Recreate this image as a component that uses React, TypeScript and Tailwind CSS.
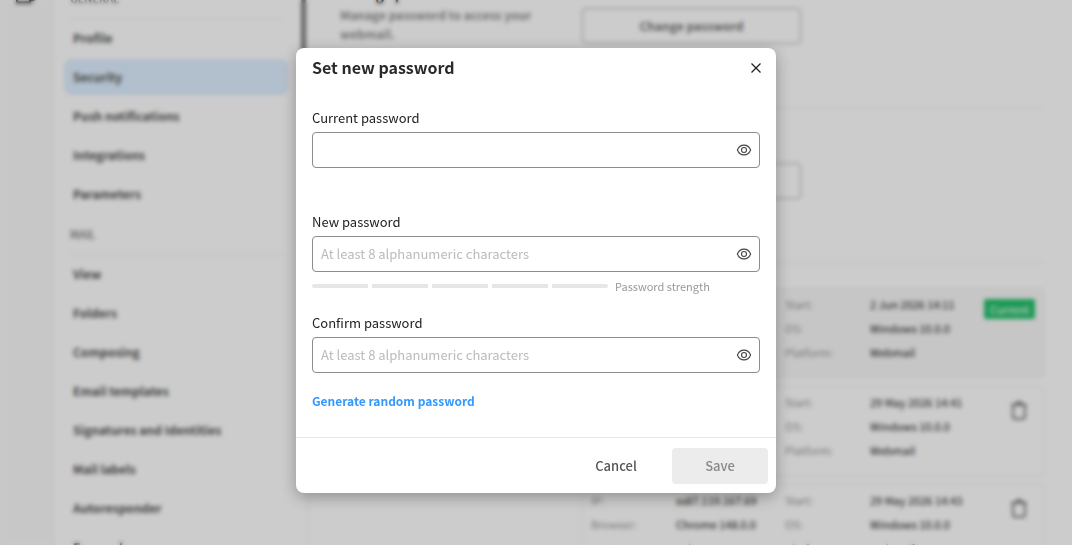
import { useState } from "react";

type Session = {
  ip: string;
  browser: string;
  device: string;
  start: string;
  os: string;
  platform: string;
  current?: boolean;
};

const general = ["Profile", "Security", "Push notifications", "Integrations", "Parameters"];
const mail = [
  "View",
  "Folders",
  "Composing",
  "Email templates",
  "Signatures and Identities",
  "Mail labels",
  "Autoresponder",
  "Forward messages",
];

const base = {
  ip: "ss87.119.167.69",
  browser: "Chrome 148.0.0",
  device: "Other 0.0.0",
  os: "Windows 10.0.0",
  platform: "Webmail",
};
const sessions: Session[] = [
  { ...base, start: "2 Jun 2026 14:11", current: true },
  { ...base, start: "29 May 2026 14:41" },
  { ...base, start: "29 May 2026 14:43" },
];

function NavGroup({ title, items, active }: { title: string; items: string[]; active?: string }) {
  return (
    <section className="mb-3">
      <h2 className="mr-6 ml-[17px] border-b border-[#f0f0f0] pb-2.5 text-[11px] leading-5 font-medium text-[#777]">
        {title}
      </h2>
      <ul className="mt-px flex flex-col gap-[3px] pr-[19px] pl-[11px]">
        {items.map((item) => (
          <li key={item}>
            <a
              href="#"
              className={
                item === active
                  ? "block rounded-lg bg-[#dfefff] px-[9px] text-[12px] leading-9 font-bold text-[#555]"
                  : "block rounded-lg px-[9px] text-[12px] leading-9 font-bold text-[#555]"
              }
            >
              {item}
            </a>
          </li>
        ))}
      </ul>
    </section>
  );
}

function Trash() {
  return (
    <svg width="18" height="20" viewBox="0 0 18 20" fill="none" stroke="#4a4a4a" strokeWidth="1.4" strokeLinejoin="round">
      <path d="M1.5 4.8h15M6 4.8L7 2.2h4l1 2.6M3 4.8V17a1.8 1.8 0 0 0 1.8 1.8h8.4A1.8 1.8 0 0 0 15 17V4.8" />
    </svg>
  );
}

function SessionCard({ s }: { s: Session }) {
  const rows = [
    ["IP:", s.ip, "Start:", s.start],
    ["Browser:", s.browser, "OS:", s.os],
    ["Device:", s.device, "Platform:", s.platform],
  ];
  return (
    <li
      className={
        s.current
          ? "flex h-[90px] justify-between rounded border border-[#f0f0f0] bg-[#f8f8f8] pt-[3px] pr-2 pl-2"
          : "flex h-[90px] justify-between rounded border border-[#f0f0f0] pt-[3px] pr-2 pl-2"
      }
    >
      <dl className="grid grid-cols-[85px_109px_85px_auto] content-start text-[11px] leading-6 whitespace-nowrap">
        {rows.flat().map((text, i) =>
          i % 2 === 0 ? (
            <dt key={i} className="text-[#999]">{text}</dt>
          ) : (
            <dd key={i} className="text-[#222]">{text}</dd>
          ),
        )}
      </dl>
      {s.current ? (
        <span className="mt-[7px] h-5 rounded-xs bg-[#26c26c] px-1.5 text-[11px] leading-5 text-white">Current</span>
      ) : (
        <button type="button" aria-label="End session" className="mt-2.5 mr-[7px] h-5">
          <Trash />
        </button>
      )}
    </li>
  );
}

function Eye() {
  return (
    <svg width="16" height="16" viewBox="0 0 16 16" fill="none" stroke="#444" strokeWidth="1.1">
      <path d="M1.4 8C2.6 5 5 3.1 8 3.1S13.4 5 14.6 8c-1.2 3-3.6 4.9-6.6 4.9S2.6 11 1.4 8Z" />
      <circle cx="8" cy="8" r="2.5" />
    </svg>
  );
}

function PasswordField({ id, label, placeholder }: { id: string; label: string; placeholder?: string }) {
  const [shown, setShown] = useState(false);
  return (
    <div className="flex flex-col gap-1">
      <label htmlFor={id} className="text-[13px] leading-5 text-[#222]">
        {label}
      </label>
      <div className="flex h-9 items-center rounded border border-[#8c8c8c] pr-[7px] pl-2">
        <input
          id={id}
          type={shown ? "text" : "password"}
          placeholder={placeholder}
          className="min-w-0 flex-1 bg-transparent text-[13px] leading-5 text-[#222] outline-none placeholder:text-[#bbb]"
        />
        <button type="button" aria-label="Show password" onClick={() => setShown(!shown)}>
          <Eye />
        </button>
      </div>
    </div>
  );
}

export default function App() {
  return (
    <div className="relative h-screen overflow-hidden bg-white font-['Noto_Sans_CJK_SC','Noto_Sans',sans-serif]">
      <div className="flex h-full">
        <nav className="flex w-[53px] shrink-0 flex-col items-center border-r border-[#efefef] bg-[#f9f9f9]">
          <svg className="-mt-4 -mr-0.5" width="24" height="20" viewBox="0 0 24 20" fill="none" stroke="#333" strokeWidth="2">
            <path d="M2 2v16.5h13V12M15 17l6-2V8" />
          </svg>
        </nav>
        <aside className="flex w-[255px] shrink-0 justify-between overflow-hidden border-r border-[#f0f0f0]">
          <div className="-mt-3 min-w-0 flex-1">
            <NavGroup title="GENERAL" items={general} active="Security" />
            <NavGroup title="MAIL" items={mail} />
          </div>
          <div className="mr-px -ml-1.5 h-[300px] w-[5px] shrink-0 bg-[#808080]" />
        </aside>
        <main className="min-w-0 flex-1 overflow-hidden pr-7 pl-8">
          <section className="-mt-4 grid h-[124px] grid-cols-[242px_1fr] border-b border-[#f0f0f0]">
            <div className="w-52">
              <h2 className="text-[14px] leading-5 font-bold text-[#222]">Change password</h2>
              <p className="pt-px text-[12px] leading-[19px] font-bold text-[#949494]">
                Manage password to access your webmail.
              </p>
            </div>
            <button type="button" className="mt-6 h-9 w-[219px] rounded border border-[#b0b0b0] text-[12px] font-bold text-[#777]">
              Change password
            </button>
          </section>
          <section className="grid h-[155px] grid-cols-[242px_1fr] border-b border-[#f0f0f0]">
            <span />
            <button type="button" aria-label="Recovery options" className="mt-[55px] h-9 w-[219px] rounded border border-[#b0b0b0]" />
          </section>
          <section className="grid grid-cols-[242px_1fr] pt-[25px]">
            <span />
            <ul className="flex flex-col gap-2">
              {sessions.map((s) => (
                <SessionCard key={s.start} s={s} />
              ))}
            </ul>
          </section>
        </main>
      </div>

      <div className="absolute inset-0 flex items-start justify-center bg-black/20 pt-12 backdrop-blur-[2px]">
        <form
          role="dialog"
          aria-labelledby="dialog-title"
          className="w-[480px] max-w-full rounded-lg bg-white shadow-[0_4px_16px_rgba(0,0,0,0.3)]"
          onSubmit={(e) => e.preventDefault()}
        >
          <header className="flex h-10 items-center justify-between px-4">
            <h1 id="dialog-title" className="pb-0.5 text-[16px] leading-6 font-bold text-[#2a2a2a]">
              Set new password
            </h1>
            <button type="button" aria-label="Close" className="-mr-1 flex size-4 items-center justify-center">
              <svg width="10" height="10" viewBox="0 0 10 10" stroke="#222" strokeWidth="1.3">
                <path d="M.5.5l9 9M9.5.5l-9 9" />
              </svg>
            </button>
          </header>
          <div className="px-4 pt-5 pb-[26px]">
            <PasswordField id="current" label="Current password" />
            <div className="mt-11">
              <PasswordField id="new" label="New password" placeholder="At least 8 alphanumeric characters" />
              <div className="mt-1 flex h-5 items-center gap-[7px]">
                <div className="flex gap-1 overflow-hidden rounded-full">
                  {[0, 1, 2, 3, 4].map((i) => (
                    <span key={i} className="h-1 w-14 bg-[#e6e6e6]" />
                  ))}
                </div>
                <span className="text-[11px] leading-[18px] text-[#999]">Password strength</span>
              </div>
            </div>
            <div className="mt-[17px]">
              <PasswordField id="confirm" label="Confirm password" placeholder="At least 8 alphanumeric characters" />
            </div>
            <button type="button" className="mt-[18px] block text-[12px] leading-5 font-bold text-[#3399ff]">
              Generate random password
            </button>
          </div>
          <footer className="flex h-14 items-start justify-end gap-2 border-t border-[#e6e6e6] pt-2.5 pr-2">
            <button type="button" className="h-9 w-24 rounded text-[13px] font-medium text-[#555]">
              Cancel
            </button>
            <button type="submit" disabled className="h-9 w-24 rounded bg-[#ececec] text-[13px] font-medium text-[#888]">
              Save
            </button>
          </footer>
        </form>
      </div>
    </div>
  );
}
